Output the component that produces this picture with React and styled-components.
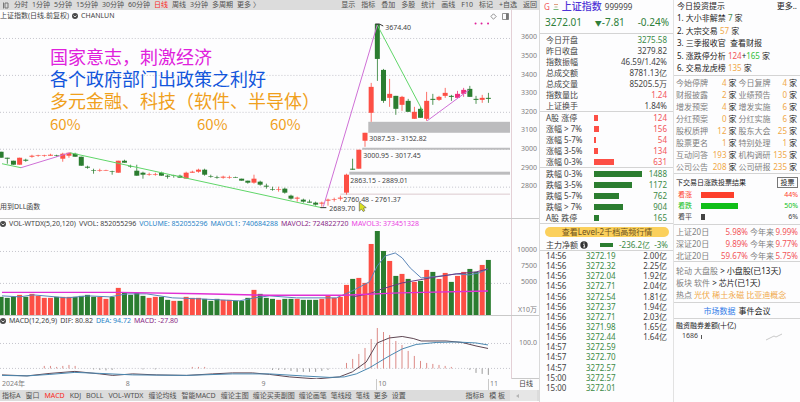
import React from "react";
import styled, { createGlobalStyle } from "styled-components";

const GlobalStyle = createGlobalStyle`
  *, *::before, *::after { box-sizing: border-box; }
  body {
    margin: 0;
    background: #fdfdfe;
    color: #444;
    font: 8px/11px "Noto Sans", "Noto Sans CJK SC", sans-serif;
  }
  button, a { font: inherit; color: inherit; text-decoration: none; }
  button { border: 0; padding: 0; background: none; cursor: pointer; }
  table { border-collapse: collapse; width: 100%; }
  td, th { padding: 0; font-weight: 400; }
`;

const RED = "#fd4f45";
const GREEN = "#2b7d30";
const INK = "#444";

const palette = {
  ink: INK,
  red: "#f2555a",
  green: "#3c8a46",
  lime: "#2fc03a",
  gold: "#f0a848",
  grey: "#808080",
  dark: "#222",
  blue: "#2a86c8",
  plum: "#8a2a86",
  magenta: "#ea3fe2",
};

const Ink = styled.span`
  color: ${(p) => palette[p.$c] || INK};
`;

const Screen = styled.div`
  display: grid;
  grid-template-columns: 540fr 134fr 126fr;
  min-height: 100vh;
`;

const Charts = styled.main`
  display: flex;
  flex-direction: column;
  min-width: 0;
  overflow: hidden;
  border-right: 1px solid #dadada;
`;

const Toolbar = styled.nav`
  display: flex;
  align-items: center;
  gap: 5px;
  height: ${(p) => (p.$bottom ? 11 : 10)}px;
  padding-left: 2px;
  background: #dcdcdc;
  font-size: 7px;
  line-height: 10px;
  white-space: nowrap;
`;

const ToolGroup = styled.div`
  display: flex;
  align-items: center;
  gap: ${(p) => p.$gap || 5}px;
  margin-left: ${(p) => (p.$end ? "auto" : 0)};
  padding-right: ${(p) => (p.$end ? 2 : 0)}px;
`;

const ToolButton = styled.button`
  color: ${(p) => (p.$active ? "#fa2a1c" : "#505050")};
`;

const ScrollTrack = styled.div`
  display: flex;
  align-items: center;
  width: 27px;
  height: 11px;
  padding-left: 6px;
  background: #e6e6e6;
`;

const Panel = styled.section`
  display: grid;
  grid-template-columns: minmax(0, 1fr) 27px;
  border-top: ${(p) => (p.$ruled ? "1px solid #c9c9c9" : "0")};
`;

const Plot = styled.div`
  position: relative;
  border-right: 1px solid #e4d0d6;
`;

const Caption = styled.header`
  display: flex;
  align-items: center;
  gap: 3px;
  height: ${(p) => (p.$tall ? 12 : 10)}px;
  font-size: 7px;
  line-height: 10px;
  white-space: nowrap;
`;

const Canvas = styled.svg`
  display: block;
  width: 100%;
  height: auto;
  overflow: hidden;
  text { font: 7px "Noto Sans", "Noto Sans CJK SC", sans-serif; fill: #444; }
`;

const Axis = styled.div`
  display: flex;
  flex-direction: column;
  padding: ${(p) => p.$pad || "0"};
  color: #808080;
  font-size: 7px;
  line-height: 10px;
  text-align: right;
  border-bottom: ${(p) => (p.$boxed ? "1px solid #c9c9c9" : "0")};
`;

const AxisLabel = styled.div`
  flex: ${(p) => (p.$unit ? "0 0 10px" : "1")};
  display: flex;
  align-items: center;
  justify-content: flex-end;
  padding-right: 2px;
  white-space: nowrap;
`;

const Notes = styled.div`
  position: absolute;
  left: 50px;
  top: 37px;
  font: 18px/22px "Liberation Sans", "Noto Sans CJK SC", sans-serif;
  white-space: nowrap;
`;

const Note = styled.div`
  color: ${(p) => p.$color};
`;

const Shares = styled.div`
  display: grid;
  grid-template-columns: 147px 73px auto;
  color: #f0a01c;
  font: 15px/22px "Noto Sans CJK SC", sans-serif;
`;

const Dates = styled.div`
  display: grid;
  grid-template-columns: 123fr 136fr 116fr 112fr 24fr 27fr;
  height: 11px;
  padding-left: 2px;
  color: #808080;
  font-size: 7px;
  line-height: 10px;
`;

const DateMark = styled.span`
  padding-left: 1px;
  color: ${(p) => (p.$dark ? INK : "inherit")};
  border-left: ${(p) => (p.$tick ? "1px solid #c9c9c9" : "0")};
  text-align: ${(p) => (p.$dark ? "center" : "left")};
`;

/* ---------- quote column ---------- */

const Quote = styled.section`
  display: flex;
  flex-direction: column;
  min-width: 0;
  padding-bottom: 9px;
  border-right: 1px solid #e2e2e2;
  white-space: nowrap;
`;

const QuoteHead = styled.header`
  display: flex;
  align-items: center;
  gap: 3px;
  height: 13px;
  padding-left: 4px;
`;

const Name = styled.h1`
  margin: 0;
  color: #4f34d6;
  font-size: 10px;
  line-height: 13px;
  font-weight: 500;
`;

const PriceRow = styled.div`
  display: flex;
  justify-content: space-between;
  height: 21px;
  padding: 2px 4px 0 5px;
  color: #2f7f3a;
  font-size: 10px;
  line-height: 14px;
  border-bottom: 1px solid #d4d4d4;
`;

const Arrow = styled.small`
  font-size: 7px;
`;

const Block = styled.div`
  border-bottom: 1px solid #d4d4d4;
  padding: 0 6px;
`;

const Pair = styled.div`
  display: flex;
  justify-content: space-between;
  height: 11px;
`;

const Breadth = styled.div`
  display: grid;
  grid-template-columns: 48px 1fr 24px;
  align-items: center;
  height: 11px;
`;

const Bar = styled.i`
  display: block;
  height: 6px;
  background: ${(p) => p.$color};
`;

const Value = styled.span`
  text-align: right;
  color: ${(p) => palette[p.$c]};
`;

const Upsell = styled.button`
  height: 10px;
  margin: 3px 4px 2px 5px;
  border-radius: 5px;
  background: #fbd05c;
  color: #6b5020;
  line-height: 10px;
`;

const NetFlow = styled.div`
  display: flex;
  align-items: center;
  gap: 2px;
  height: 12px;
  padding: 0 5px 0 6px;
  color: ${palette.green};
  border-bottom: 1px solid #d4d4d4;
  ${Bar} { width: 13px; height: 4px; margin: 0 4px 0 10px; }
`;

const Percent = styled.span`
  margin-left: auto;
`;

const Ticks = styled.div`
  flex: 1;
  padding: 0 6px;
  table { height: 100%; }
  td { line-height: 10px; }
  td:nth-child(1) { width: 40px; }
  td:nth-child(2) { color: ${palette.green}; }
  td:nth-child(3) { text-align: right; }
`;

/* ---------- tips column ---------- */

const Tips = styled.aside`
  min-width: 0;
  white-space: nowrap;
`;

const Section = styled.section`
  padding: ${(p) => p.$pad || "0 2px"};
  border-bottom: ${(p) => (p.$last ? "0" : "1px solid #d4d4d4")};
`;

const TipsHead = styled.header`
  display: flex;
  justify-content: space-between;
  height: 12px;
  padding: 0 3px;
  color: ${palette.dark};
  line-height: 11px;
`;

const TipList = styled.ul`
  list-style: none;
  margin: 0;
  padding: 0 3px 1px;
  color: ${palette.dark};
`;

const Tip = styled.li`
  line-height: 12px;
  height: 12px;
  margin-bottom: ${(p) => (p.$loose ? 1 : 0)}px;
`;

const Counts = styled.table`
  table-layout: fixed;
  td, th { height: 12px; line-height: 12px; text-align: left; color: ${palette.grey}; }
  td { text-align: right; color: ${palette.gold}; }
  th { width: 33px; }
  td + td { color: ${palette.dark}; width: 10px; }
`;

const VoteHead = styled.div`
  display: flex;
  align-items: center;
  justify-content: space-between;
  height: 13px;
  color: ${palette.dark};
  font-size: 7px;
`;

const VoteButton = styled.button`
  width: 21px;
  height: 11px;
  border: 1px solid #777;
  line-height: 9px;
`;

const Vote = styled.div`
  display: grid;
  grid-template-columns: 23px 74px 1fr;
  align-items: center;
  height: 11px;
  padding-left: 2px;
  color: ${(p) => p.$color};
  font-size: 7px;
`;

const VotePct = styled.span`
  text-align: right;
`;

const Returns = styled.table`
  table-layout: fixed;
  td, th { height: 12px; text-align: right; color: ${palette.red}; }
  th { width: 26px; color: ${palette.grey}; }
  th:first-child { width: 34px; text-align: left; }
  td:last-child { width: 24px; }
`;

const Line = styled.div`
  height: 12px;
  line-height: 12px;
`;

const Tabs = styled.div`
  display: flex;
  justify-content: center;
  gap: 3px;
  height: 15px;
`;

const Tab = styled.button`
  color: ${(p) => (p.$active ? "#2f7be8" : palette.dark)};
`;

const SmallTitle = styled.h2`
  margin: 0;
  color: ${palette.dark};
  font-size: 7px;
  line-height: 12px;
  font-weight: 400;
`;

/* ---------- chart data ---------- */

const STEP = 6.18;
const cx = (i) => 1.1 + STEP * i;

// [direction, high, top, bottom, low]
const candles = [
  ["d", 152, 152, 158, 158], ["d", 158, 158, 159, 164], ["d", 161, 161, 165, 165], ["u", 158, 158, 165, 165],
  ["d", 159, 160, 161, 162], ["u", 155, 156, 157, 158], ["u", 155, 155.4, 156, 157], ["u", 155, 155.4, 156, 157],
  ["u", 154, 155, 156, 156], ["d", 155, 155.4, 156, 157], ["u", 153, 154, 159, 162], ["u", 153, 153, 156, 158],
  ["d", 153, 154, 157, 157], ["d", 157, 157, 166, 166], ["d", 166, 167, 168, 169], ["d", 169, 170.4, 171, 174],
  ["u", 169, 170.4, 171, 172], ["u", 170, 170.4, 171, 171], ["d", 171, 171.4, 172, 175], ["u", 161, 161, 173, 173],
  ["d", 160, 161, 163, 163], ["d", 165, 166.4, 167, 168], ["d", 165, 171, 176, 176], ["d", 172, 173, 175, 179],
  ["u", 173, 174.4, 175, 176], ["u", 173, 174.4, 175, 176], ["d", 172, 173, 176, 176], ["d", 175, 176, 177, 179],
  ["d", 175, 175.4, 176, 178], ["d", 175, 176, 178, 178], ["u", 172, 173, 179, 179], ["u", 171, 172, 173, 173],
  ["u", 169, 170, 172, 173], ["d", 169, 170, 175, 176], ["d", 175, 176.4, 177, 178], ["d", 176, 177.4, 178, 179],
  ["u", 176, 177, 178, 179], ["u", 176, 177.4, 178, 179], ["d", 177, 177.4, 178, 178], ["d", 179, 179, 181, 181],
  ["d", 181, 181, 183, 184], ["u", 175, 179, 183, 184], ["d", 181, 182, 185, 186], ["d", 184, 186, 187, 189],
  ["d", 187, 189.4, 190, 191], ["u", 187, 189.4, 190, 192], ["d", 188, 189, 193, 194], ["d", 195, 196, 199, 200],
  ["u", 197, 198, 199, 202], ["d", 199, 200, 202, 203], ["d", 200, 202, 203, 203], ["d", 202, 203, 205, 206],
  ["u", 202, 203, 204, 207], ["u", 199, 200, 201, 206], ["u", 198, 199.4, 200, 202], ["u", 196, 198, 199, 201],
  ["u", 174, 175, 193, 195], ["d", 159, 169, 170, 170], ["u", 150, 150, 169, 169], ["u", 133, 133, 141, 147],
  ["u", 83, 87, 113, 122], ["d", 24, 24, 59, 81], ["d", 69, 70, 101, 103], ["u", 79, 94, 98, 107],
  ["d", 96, 96, 109, 115], ["u", 96, 97, 105, 111], ["d", 99, 101, 112, 112], ["u", 107, 112, 119, 119],
  ["d", 107, 109, 118, 118], ["u", 92, 101, 119, 121], ["d", 94, 99, 100, 105], ["u", 96, 97, 100, 101],
  ["u", 88, 93, 96, 98], ["d", 95, 96, 97, 101], ["m", 91, 94, 98, 98], ["m", 88, 90, 94, 97],
  ["d", 86, 89, 97, 97], ["d", 96, 99, 100, 104], ["u", 95, 98, 100, 103], ["d", 93, 98, 99, 103],
];

const candleColor = { u: RED, d: GREEN, m: "#ee2f7c" };

const volumeTops = [
  297, 298, 297, 295, 297, 294, 296, 298, 298, 297, 297, 297, 297, 296, 295, 297, 297, 299, 297, 288,
  293, 295, 293, 296, 298, 297, 297, 300, 301, 301, 297, 298, 298, 299, 301, 299, 300, 300, 301, 301,
  298, 290, 294, 298, 299, 300, 299, 299, 299, 300, 300, 300, 299, 296, 298, 297, 285, 279, 278, 283,
  244, 231, 251, 261, 276, 274, 279, 282, 281, 270, 272, 279, 273, 282, 276, 272, 269, 272, 265, 260,
];

const volumeDir =
  "ddd u d uuuu d uu dddd uu d u dddd uu dd u d uuu ddd uu ddd u ddd u dd u ddd uuuuu d uuu dd u d u d u d u d uu d uu dd u d".replace(/ /g, "");

const macdBars = [
  [7, 367], [8, 367], [9, 368], [10, 367], [11, 366], [12, 367], [15, 370.5], [16, 371], [17, 371.5], [18, 371],
  [23, 370.5], [25, 370.5], [31, 368], [32, 368], [33, 368], [44, 371], [45, 371], [46, 371], [47, 372], [48, 373],
  [49, 373], [50, 373], [51, 373], [52, 372], [53, 371], [56, 364], [57, 360], [58, 355], [59, 349], [60, 340],
  [61, 329], [62, 333], [63, 336], [64, 342], [65, 346], [66, 352], [67, 357], [68, 362], [69, 364], [70, 365],
  [71, 366], [72, 367], [73, 368], [76, 371], [77, 374], [78, 375], [79, 376],
];

function PriceChart() {
  return (
    <Canvas viewBox="0 22 512 196" role="img" aria-label="日线K线图">
      {[38, 75, 112, 149, 187].map((y) => (
        <line key={y} x1="0" x2="512" y1={y + 0.5} y2={y + 0.5} stroke="#c4c4cc" strokeDasharray="1 2" />
      ))}
      <g fill="#bcbcbe">
        <rect x="369" y="122" width="142" height="11" />
        <rect x="363" y="148" width="148" height="2" />
        <rect x="350" y="172" width="161" height="3" />
      </g>
      <path d="M341 194.500H511" stroke="#dccace" />
      {candles.map(([dir, high, top, bottom, low], i) => (
        <g key={i} fill={candleColor[dir]}>
          <rect x={cx(i) - 0.4} y={high} width="0.8" height={low - high} />
          <rect x={cx(i) - 2.5} y={top} width="5" height={bottom - top} />
        </g>
      ))}
      <g fill="none" strokeWidth="1">
        <path d="M2 164L21 168M70 153L322 208M378 25L424 112" stroke="#5fd668" />
        <path d="M21 168L70 153M324 207L378 25M428 121L470 90" stroke="#cf6fd6" />
      </g>
      <path d="M376 24h4l4 2M321 208h6" stroke="#333" fill="none" />
      <g fill="#e0209a">
        <circle cx="476.500" cy="23.500" r="1" />
        <circle cx="482.500" cy="23.500" r="1" />
        <circle cx="489" cy="23.500" r="1" />
      </g>
      <text x="386" y="30">3674.40</text>
      <text x="370" y="141">3087.53 - 3152.82</text>
      <text x="364" y="158">3000.95 - 3017.45</text>
      <text x="351" y="183">2863.15 - 2889.01</text>
      <text x="344" y="202">2760.48 - 2761.37</text>
      <text x="330" y="211">2689.70</text>
      <text x="0" y="209">用到DLL函数</text>
      <path d="M360 202.500V211.500L362.200 209.500L364 212L365.500 211L364.200 208.500L367 208Z" fill="#d9e021" stroke="#555" strokeWidth="0.600" />
    </Canvas>
  );
}

function VolumeChart() {
  return (
    <Canvas viewBox="0 229 512 87" role="img" aria-label="成交量">
      {[251, 283].map((y) => (
        <line key={y} x1="0" x2="512" y1={y + 0.5} y2={y + 0.5} stroke="#c4c4cc" strokeDasharray="1 2" />
      ))}
      {volumeTops.map((top, i) => (
        <rect key={i} x={cx(i) - 2.5} y={top} width="5" height={315.5 - top} fill={volumeDir[i] === "u" ? RED : GREEN} />
      ))}
      <g fill="none" strokeWidth="1">
        <path
          d="M2 296L20 297L33 295L67 298L88 296L110 297L127 294L147 294L173 298L200 299L240 301L255 298L270 296L297 298L337 298L353 291L370 282L378 266L386 256L396 253L403 258L411 268L422 278L443 276L457 274L470 275L480 273L489 269"
          stroke="#5a86b8"
        />
        <path d="M353 297L370 294L383 289L403 283L437 277L457 274L477 272L489 269" stroke="#6a3a86" />
        <path d="M2 292.500L120 292.500L200 294L270 295.500L345 295.500L400 293L489 291" stroke="#e030d4" strokeWidth="1.500" />
      </g>
    </Canvas>
  );
}

function MacdChart() {
  return (
    <Canvas viewBox="0 327 512 53" role="img" aria-label="MACD">
      {[344, 369].map((y) => (
        <line key={y} x1="0" x2="512" y1={y + 0.5} y2={y + 0.5} stroke="#c4c4cc" strokeDasharray="1 2" />
      ))}
      {macdBars.map(([i, y]) => (
        <line key={i} x1={cx(i)} x2={cx(i)} y1="369.500" y2={y} stroke={y < 369 ? "#dc8a86" : "#9a9a9a"} />
      ))}
      <g fill="none" strokeWidth="1">
        <path
          d="M2 376L27 377L50 374.500L75 372.500L100 375L113 376.500L133 375L157 376L187 376.500L213 375L233 374L253 374L270 375.500L290 378L317 380L340 378L353 373L367 363L378 344L390 339L403 337.500L414 339.500L422 342L447 342L463 343.500L477 347L489 349.500"
          stroke="#5e4652"
        />
        <path
          d="M2 376.500L27 377L50 375.500L75 373.500L100 374.500L133 376L187 376.500L233 375L270 375L303 377L330 378.500L345 378L357 375L370 369L390 357L403 350L417 345.500L437 343.500L457 343L477 344L489 346"
          stroke="#4a88b0"
        />
      </g>
    </Canvas>
  );
}

const Dot = () => (
  <svg width="6" height="6" viewBox="0 0 6 6" aria-hidden="true">
    <circle cx="3" cy="3" r="3" fill="#4a4a4a" />
    <path d="M1.500 2.500L3 4L4.500 2.500" stroke="#fff" strokeWidth="0.800" fill="none" />
  </svg>
);

const InfoDot = () => (
  <svg width="8" height="8" viewBox="0 0 8 8" aria-hidden="true">
    <circle cx="4" cy="4" r="3.700" fill="#333" />
    <path d="M4 1.500V2.600M3.300 3.500H4.300V6M3.200 6H5.200" stroke="#fff" strokeWidth="0.900" fill="none" />
  </svg>
);

const periods = ["分时", "1分钟", "5分钟", "15分钟", "30分钟", "60分钟", "日线", "周线", "3分钟", "多周期", "更多 〉"];
const tools = ["显示", "指标", "叠加", "多股", "统计", "画线", "F10", "标记", "+自选", "返回"];
const indicators = ["指标A", "窗口", "MACD", "KDJ", "BOLL", "VOL-WTDX", "缠论均线", "智能MACD"];
const drawings = ["缠论主图", "缠论买卖副图", "缠论画笔", "笔线段", "笔线", "更多", "设置"];

const quoteRows = [
  ["今日开盘", "3275.58", "green"], ["昨日收盘", "3279.82", "ink"], ["指数振幅", "46.59/1.42%", "ink"],
  ["总成交额", "8781.13亿", "ink"], ["总成交量", "85205.5万", "ink"], ["指数量比", "1.24", "red"], ["上证换手", "1.84%", "ink"],
];
const risers = [["A股 涨停", 124], ["涨幅 > 7%", 156], ["涨幅 5-7%", 54], ["涨幅 3-5%", 134], ["涨幅 0-3%", 631]];
const fallers = [["跌幅 0-3%", 1488], ["跌幅 3-5%", 1172], ["跌幅 5-7%", 762], ["跌幅 > 7%", 904], ["A股 跌停", 165]];
const ticks = [
  ["14:56", "3272.19", "2.00亿"], ["14:56", "3272.32", "2.25亿"], ["14:56", "3272.04", "1.92亿"],
  ["14:56", "3272.71", "2.04亿"], ["14:56", "3272.54", "1.81亿"], ["14:56", "3272.37", "1.94亿"],
  ["14:56", "3272.71", "2.03亿"], ["14:56", "3271.98", "1.65亿"], ["14:56", "3272.44", "1.64亿"],
  ["14:57", "3272.59", ""], ["14:57", "3272.70", ""], ["14:57", "3272.57", ""], ["15:00", "3272.57", ""], ["15:00", "3272.01", ""],
];
const counts = [
  ["今始停牌", 4, "今日复牌", 4], ["财报披露", 2, "业绩预告", 0], ["增发预案", 4, "增发实施", 6], ["分红预案", 0, "分红实施", 6],
  ["股权质押", 12, "股东大会", 25], ["股票更名", 1, "特别处理", 1], ["互动问答", 193, "机构调研", 135], ["公司公告", 208, "公司研报", 235],
];
const votes = [["看涨", 44, "#fd3f2c"], ["看跌", 50, "#10bf18"], ["看平", 6, "#444"]];
const returns = [["上证20日", "5.98%", "9.99%"], ["深证20日", "9.89%", "9.77%"], ["北证20日", "59.67%", "5.75%"]];

const BreadthRows = ({ rows, color, tone }) =>
  rows.map(([label, n]) => (
    <Breadth key={label}>
      <span>{label}</span>
      <Bar $color={color} style={{ width: `${Math.max(n / 15.2, 5)}%` }} />
      <Value $c={tone}>{n}</Value>
    </Breadth>
  ));

export default function App() {
  return (
    <Screen>
      <GlobalStyle />
      <Charts>
        <Toolbar>
          <svg width="7" height="7" viewBox="0 0 7 7" aria-hidden="true">
            <path d="M1.500 0.500V6.500M3 1H6V6H3Z" stroke="#777" fill="none" />
          </svg>
          <ToolGroup $gap={4}>
            {periods.map((t) => (
              <ToolButton key={t} $active={t === "日线"}>{t}</ToolButton>
            ))}
          </ToolGroup>
          <ToolGroup $end $gap={6}>
            {tools.map((t) => (
              <ToolButton key={t}>{t}</ToolButton>
            ))}
          </ToolGroup>
        </Toolbar>

        <Panel>
          <Plot>
            <Caption $tall>
              <span>上证指数(日线.前复权)</span>
              <Dot />
              <span>CHANLUN</span>
              <ToolGroup $end>
                <svg width="7" height="7" viewBox="0 0 7 7" aria-hidden="true">
                  <path d="M3.500 0.800L6.200 3.500L3.500 6.200L0.800 3.500Z" stroke="#777" strokeWidth="0.800" fill="none" />
                </svg>
                <svg width="7" height="7" viewBox="0 0 7 7" aria-hidden="true">
                  <path d="M0.500 0.500H6.500V6.500H0.500Z" stroke="#777" strokeWidth="0.800" fill="none" />
                  <path d="M4 0.500H6.500V6.500H4Z" fill="#777" />
                </svg>
              </ToolGroup>
            </Caption>
            <PriceChart />
            <Notes>
              <Note $color="#e020dc">国家意志，刺激经济</Note>
              <Note $color="#1256dc">各个政府部门出政策之利好</Note>
              <Note $color="#f0a01c">多元金融、科技（软件、半导体）</Note>
              <Shares>
                <span>60%</span>
                <span>60%</span>
                <span>60%</span>
              </Shares>
            </Notes>
          </Plot>
          <Axis $pad="18px 0 22px">
            {[3600, 3500, 3400, 3300, 3200, 3100, 3000, 2900, 2800].map((v) => (
              <AxisLabel key={v}>{v}</AxisLabel>
            ))}
          </Axis>
        </Panel>

        <Panel $ruled>
          <Plot>
            <Caption>
              <Dot />
              <span>VOL-WTDX(5,20,120)</span>
              <span>VVOL: 852055296</span>
              <Ink $c="blue">VOLUME: 852055296</Ink>
              <Ink $c="blue">MAVOL1: 740684288</Ink>
              <Ink $c="plum">MAVOL2: 724822720</Ink>
              <Ink $c="magenta">MAVOL3: 373451328</Ink>
            </Caption>
            <VolumeChart />
          </Plot>
          <Axis $pad="24px 0 0">
            {["10000", "7500", "5000"].map((v) => (
              <AxisLabel key={v}>{v}</AxisLabel>
            ))}
            <AxisLabel />
            <AxisLabel $unit>X10万</AxisLabel>
          </Axis>
        </Panel>

        <Panel $ruled>
          <Plot>
            <Caption>
              <Dot />
              <span>MACD(12,26,9)</span>
              <span>DIF: 80.82</span>
              <Ink $c="blue">DEA: 94.72</Ink>
              <Ink $c="plum">MACD: -27.80</Ink>
            </Caption>
            <MacdChart />
          </Plot>
          <Axis $boxed $pad="0 0 8px">
            <AxisLabel>100.0</AxisLabel>
          </Axis>
        </Panel>

        <Dates>
          <span>2024年</span>
          <DateMark>8</DateMark>
          <DateMark>9</DateMark>
          <DateMark $tick>10</DateMark>
          <DateMark $tick>11</DateMark>
          <DateMark $dark>日线</DateMark>
        </Dates>

        <Toolbar $bottom>
          {indicators.map((t) => (
            <ToolButton key={t} $active={t === "MACD"}>{t}</ToolButton>
          ))}
          <ToolGroup $gap={4}>
            {drawings.map((t) => (
              <ToolButton key={t}>{t}</ToolButton>
            ))}
          </ToolGroup>
          <ToolGroup $end>
            <ToolButton>指标B</ToolButton>
            <ToolButton>模 板</ToolButton>
            <ScrollTrack>
              <svg width="3" height="4" viewBox="0 0 3 4" aria-hidden="true">
                <path d="M3 0V4L0 2Z" fill="#b4b4b4" />
              </svg>
            </ScrollTrack>
          </ToolGroup>
        </Toolbar>
      </Charts>

      <Quote>
        <QuoteHead>
          <Ink $c="red">G</Ink>
          <svg width="6" height="6" viewBox="0 0 6 6" aria-hidden="true">
            <path d="M1 0.500H5" stroke="#e0a080" />
            <path d="M1.500 3H4.500" stroke="#b8b890" />
            <path d="M0.500 5.500H5.500" stroke="#7ab87e" />
          </svg>
          <Name>上证指数</Name>
          <span>999999</span>
        </QuoteHead>
        <PriceRow>
          <span>3272.01</span>
          <span><Arrow>▼</Arrow>-7.81</span>
          <span>-0.24%</span>
        </PriceRow>
        <Block>
          {quoteRows.map(([label, value, c]) => (
            <Pair key={label}>
              <span>{label}</span>
              <Ink $c={c}>{value}</Ink>
            </Pair>
          ))}
        </Block>
        <Block>
          <BreadthRows rows={risers} color={RED} tone="red" />
        </Block>
        <Block>
          <BreadthRows rows={fallers} color={GREEN} tone="green" />
        </Block>
        <Upsell>查看Level-2千档高频行情</Upsell>
        <NetFlow>
          <Ink>主力净额</Ink>
          <InfoDot />
          <Bar $color={GREEN} />
          <span>-236.2亿</span>
          <Percent>-3%</Percent>
        </NetFlow>
        <Ticks>
          <table>
            <tbody>
              {ticks.map((row, i) => (
                <tr key={i}>
                  {row.map((cell, j) => (
                    <td key={j}>{cell}</td>
                  ))}
                </tr>
              ))}
            </tbody>
          </table>
        </Ticks>
      </Quote>

      <Tips>
        <TipsHead>
          <span>今日投资提示</span>
          <a href="#more">更多..</a>
        </TipsHead>
        <Section $pad="0">
          <TipList>
            <Tip $loose>1. 大小非解禁 <Ink $c="green">7</Ink> 家</Tip>
            <Tip>2. 大宗交易 <Ink $c="gold">57</Ink> 家</Tip>
            <Tip $loose>3. 三季报收官&nbsp; 查看财报</Tip>
            <Tip>5. 涨跌停分析 <Ink $c="red">124</Ink>+<Ink $c="lime">165</Ink> 家</Tip>
            <Tip>6. 交易龙虎榜 <Ink $c="gold">135</Ink> 家</Tip>
          </TipList>
        </Section>
        <Section $pad="1px 3px 0 2px">
          <Counts>
            <tbody>
              {counts.map(([a, n, b, m]) => (
                <tr key={a}>
                  <th scope="row">{a}</th>
                  <td>{n}</td>
                  <td>家</td>
                  <th scope="row">&nbsp;{b}</th>
                  <td>{m}</td>
                  <td>家</td>
                </tr>
              ))}
            </tbody>
          </Counts>
        </Section>
        <Section $pad="2px 2px 2px">
          <VoteHead>
            <span>下交易日涨跌投票结果</span>
            <VoteButton>投票</VoteButton>
          </VoteHead>
          {votes.map(([label, pct, color]) => (
            <Vote key={label} $color={color}>
              <span>{label}</span>
              <Bar $color={color} style={{ width: `${pct}%` }} />
              <VotePct>{pct}%</VotePct>
            </Vote>
          ))}
        </Section>
        <Section>
          <Returns>
            <tbody>
              {returns.map(([name, a, b]) => (
                <tr key={name}>
                  <th scope="row">{name}</th>
                  <td>{a}</td>
                  <th>今年来</th>
                  <td>{b}</td>
                </tr>
              ))}
            </tbody>
          </Returns>
        </Section>
        <Section $pad="3px 2px 1px">
          <Line><Ink $c="grey">轮动 大盘股</Ink> <Ink $c="dark">&gt; 小盘股(已13天)</Ink></Line>
          <Line><Ink $c="grey">板块 软件</Ink> <Ink $c="dark">&gt; 芯片(已1天)</Ink></Line>
          <Line><Ink $c="grey">热点</Ink> <Ink $c="gold">光伏 稀土永磁 比亚迪概念</Ink></Line>
        </Section>
        <Section>
          <Tabs>
            <Tab $active>市场数据</Tab>
            <Tab>事件会议</Tab>
          </Tabs>
        </Section>
        <Section $last $pad="1px 2px">
          <SmallTitle>融资融券差额(十亿)</SmallTitle>
          <Canvas viewBox="0 0 122 16" role="img" aria-label="融资融券差额走势">
            <text x="6" y="6">1686</text>
            <path d="M25.500 3V7" stroke="#555" />
            <path d="M90 8L98 4L100 5L106 2" stroke="#c9c9c9" fill="none" />
          </Canvas>
        </Section>
      </Tips>
    </Screen>
  );
}
